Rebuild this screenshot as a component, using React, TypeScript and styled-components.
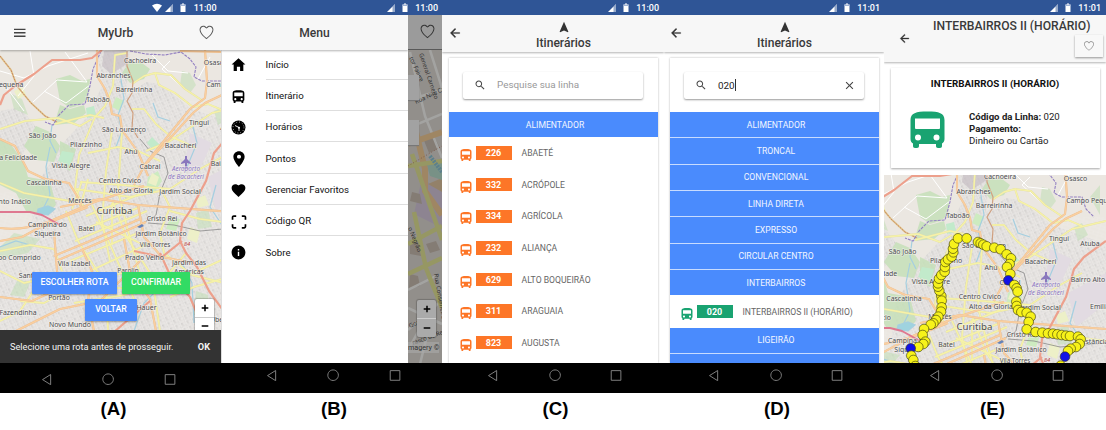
import React from 'react';
import styled, { createGlobalStyle } from 'styled-components';
import {
  IoMdHome, IoMdBus, IoMdPin, IoMdHeart, IoMdQrScanner, IoMdInformationCircle,
  IoMdSearch, IoMdArrowBack, IoMdNavigate, IoMdClose, IoIosHeartEmpty,
} from 'react-icons/io';

const Global = createGlobalStyle`
  body { margin: 0; background: #fff; font-family: Roboto, "Liberation Sans", sans-serif; color: #333; }
  * { box-sizing: border-box; }
  svg { display: block; flex: none; }
`;

const Figure = styled.main`display: flex; width: 1106px; height: 430px; overflow: hidden;`;
const Phone = styled.section<{ $w: number }>`width: ${p => p.$w}px; flex: none; display: flex; flex-direction: column;`;
const Status = styled.div<{ $right: number }>`
  height: 15px; background: #2f5596; color: #fff; display: flex; align-items: center;
  justify-content: flex-end; gap: 6px; padding: 1px ${p => p.$right}px 0 0;
  font-size: 9px; font-weight: 500; line-height: 14px;
  svg { margin-right: 0.5px; }
`;
const Screen = styled.div`height: 348px; position: relative; overflow: hidden; display: flex; flex-direction: column; background: #fff;`;
const Nav = styled.div<{ $left: number; $top: number }>`
  height: 30px; background: #000; display: flex; align-items: flex-start; gap: 49.5px;
  padding: ${p => p.$top}px 0 0 ${p => p.$left}px;
`;
const Caption = styled.div<{ $shift?: number; $w?: number }>`
  font: bold 18.6px/31px "Liberation Sans", sans-serif; color: #000; text-align: center;
  padding-left: ${p => p.$shift || 0}px; width: ${p => p.$w || 226}px;
`;
const Header = styled.header`
  height: 34.5px; flex: none; background: #f7f7f7; display: grid; align-items: center; padding-top: 1px;
  grid-template-columns: 40px 1fr 30px; box-shadow: 0 1px 2px rgba(0,0,0,.3); position: relative; z-index: 1;
`;
const Title = styled.h1`margin: 0; font-size: 12.1px; line-height: 14px; font-weight: 500; color: #3a3a3a; text-align: center;`;
const Backdrop = styled.div`position: absolute; inset: 0;`;
const MenuSlot = styled.div`padding-left: 14px;`;
const HeartSlot = styled.div`padding-left: 7px; color: #555;`;

const MapBody = styled.div`flex: 1; position: relative; display: flex; flex-direction: column; overflow: hidden;`;
const Buttons = styled.div`position: relative; display: flex; flex-wrap: wrap; justify-content: center; gap: 5px; padding: 222px 31px 0 32px;`;
const Button = styled.button<{ $w: number; $color: string }>`
  width: ${p => p.$w}px; height: 22px; border: 0; border-radius: 1px; padding: 0 0 1px; background: ${p => p.$color}; color: #fff;
  font: 500 8.8px/20px Roboto, sans-serif; white-space: nowrap; box-shadow: 0 1px 2px rgba(0,0,0,.35);
`;
const Zoom = styled.div<{ $top: number; $right: number }>`
  position: absolute; top: ${p => p.$top}px; right: ${p => p.$right}px; width: 19px; background: #fff;
  border-radius: 2px; box-shadow: 0 0 1px 1px rgba(0,0,0,.2);
`;
const ZoomKey = styled.div`height: 18.3px; display: grid; place-items: center; & + & { border-top: 1px solid #ccc; }`;
const Toast = styled.div`
  position: relative; margin-top: auto; height: 33.5px; background: #333; color: #f5f5f5; display: flex; align-items: center;
  justify-content: space-between; padding: 1px 11px 0 10px; font-size: 9.2px; white-space: nowrap;
  strong { font-size: 9.2px; font-weight: 700; }
`;

const DrawerRow = styled.div`display: flex; flex: 1;`;
const Drawer = styled.aside`width: 187px; display: flex; flex-direction: column; background: #fff; position: relative; box-shadow: inset 1px 0 #ddd;`;
const DrawerHead = styled.div`height: 34.5px; background: #f7f7f7; display: grid; place-items: center; padding-top: 1px; box-shadow: 0 1px 2px rgba(0,0,0,.3); margin-bottom: -1px;`;
const MenuItem = styled.div`
  height: 31.3px; display: grid; grid-template-columns: 34px 1fr; align-items: center; padding-left: 9px; font-size: 9.7px; color: #111;
  & > span { height: 100%; margin-left: 1.5px; padding-top: 1.5px; border-bottom: 1px solid #dedede; display: flex; align-items: center; }
  &:last-child > span { border-color: transparent; }
`;
const Dimmed = styled.div`width: 34px; position: relative; overflow: hidden; background: #9b9b9b;`;
const DimHead = styled.div`height: 34.5px; display: grid; place-items: center; color: #333; border-bottom: 1px solid #888; padding-left: 4px;`;
const Shade = styled.div`position: absolute; inset: 34px 0 0; background: rgba(0,0,0,.34);`;
const ShadeZoom = styled(Zoom)`background: #aaa; left: 9px; right: auto;`;
const Imagery = styled.div`position: absolute; top: 327px; left: 0; width: 31px; height: 11px; background: rgba(170,170,170,.6); color: #333; font-size: 7.2px; line-height: 11px; white-space: nowrap;`;
const DimCard = styled.div<{ $top: number }>`position: absolute; top: ${p => p.$top}px; left: 0; width: 11px; height: 25px; background: #a2a2a2; box-shadow: 0 1px 1px #777;`;

const ListHeader = styled(Header)`
  height: 37px; grid-template-columns: 26px 1fr 26px; align-items: start; padding-top: 0;
`;
const BackSlot = styled.div<{ $l: number; $t: number }>`
  padding: ${p => p.$t}px 0 0 ${p => p.$l}px; color: #333;
  svg { stroke: #333; stroke-width: 12; }
`;
const Stacked = styled.div`display: flex; flex-direction: column; align-items: center; padding: 4.5px 0 0 21px; color: #333; gap: 2px;`;
const Card = styled.div<{ $l: number }>`
  width: 209px; margin: 5.5px 0 0 ${p => p.$l}px; flex: 1; background: #fff; box-shadow: 0 0 2px rgba(0,0,0,.3);
  display: flex; flex-direction: column; overflow: hidden;
`;
const Search = styled.div`
  margin: 14px 14.5px 13.5px; height: 27px; flex: none; border-radius: 2px; box-shadow: 0 1px 2px rgba(0,0,0,.4);
  display: flex; align-items: center; padding: 0 8.5px 0 10.5px; color: #444; font-size: 9.9px;
`;
const Field = styled.span<{ $on?: boolean }>`
  margin-left: 11.5px; flex: 1; color: ${p => (p.$on ? '#222' : '#999')}; line-height: 12px;
`;
const Caret = styled.i`display: inline-block; width: 1px; height: 12px; background: #333; vertical-align: -2px;`;
const Category = styled.div`
  height: 25.35px; flex: none; background: #4a8bfd; color: #f2f6ff; font-size: 8.65px; display: grid; place-items: center; padding-left: 4px;
  & + & { margin-top: 1px; }
`;
const Blue = styled.div`background: #c8dcff; display: flex; flex-direction: column; flex: none;`;
const Line = styled.div<{ $color: string; $h?: number }>`
  height: ${p => p.$h || 31.6}px; flex: none; display: flex; align-items: center; padding-left: 9.5px; font-size: 8.65px; color: #666;
  svg { color: ${p => p.$color}; margin: 4px 1.5px 0 0; }
  b { width: 36px; height: 13.5px; background: ${p => p.$color}; color: #fff; display: grid; place-items: center; margin-right: 10px; font-size: 9px; }
`;

const DetailHeader = styled(Header)`height: 47px; grid-template-columns: 46px 1fr; align-items: start; padding-top: 0;`;
const DetailTitle = styled(Title)`text-align: left; white-space: nowrap; padding: 3.5px 0 2px 3px; line-height: 14px; font-size: 12.150px;`;
const Favorite = styled.div`width: 28px; height: 22.5px; margin: 0 3px 0 auto; background: #f8f8f8; box-shadow: 0 1px 2px rgba(0,0,0,.4); display: grid; place-items: center; color: #888;`;
const InfoCard = styled.div`
  width: 209px; height: 100px; margin: 6px 0 7px 6.5px; flex: none; background: #fff; box-shadow: 0 1px 2px rgba(0,0,0,.35); color: #222;
`;
const InfoTitle = styled.h2`margin: 0; padding-top: 9px; text-align: center; font-size: 9.8px; line-height: 14px; font-weight: 700; color: #111;`;
const InfoRow = styled.div`display: flex; align-items: center; gap: 24px; padding: 19.5px 0 0 19.5px; font-size: 9.6px; line-height: 12.3px;`;

const Bars = () => <svg width="12" height="10" viewBox="0 0 12 10"><path d="M0 1.400h11.500M0 4.800h11.500M0 8.200h11.500" stroke="#444" strokeWidth="1.400" /></svg>;
const Clock = () => (
  <svg width="15" height="15" viewBox="0 0 30 30">
    <circle cx="15" cy="15" r="14" fill="#000" />
    <circle cx="15" cy="15" r="11" fill="none" stroke="#fff" strokeWidth="1.600" strokeDasharray="1.600 4.160" />
    <path d="M8 11l8 4v7" stroke="#fff" strokeWidth="1.800" fill="none" /><circle cx="16" cy="15.500" r="2" fill="#fff" />
  </svg>
);
const BigBus = () => (
  <svg width="35" height="37" viewBox="0 0 35 37">
    <path fill="#19a371" fillRule="evenodd" d="M.5 9C.5 2 6 .5 17.500.5S34.500 2 34.500 9v19c0 2-1 3.500-2.500 4.500V35c0 1-.7 2-2 2h-2c-1.300 0-2-1-2-2v-2H9v2c0 1-.7 2-2 2H5c-1.300 0-2-1-2-2v-2.500C1.500 31.500.5 30 .5 28zM5 7.500V17q0 1 1 1h23q1 0 1-1V7.500zM8 23.500a3 3 0 1 0 0 6 3 3 0 0 0 0-6zm18.500 0a3 3 0 1 0 0 6 3 3 0 0 0 0-6z" />
  </svg>
);
const Sign = ({ minus }: { minus?: boolean }) => (
  <svg width="8" height="8" viewBox="0 0 8 8"><path d={minus ? 'M.7 4h6.600' : 'M.7 4h6.600M4 .7v6.600'} stroke="#000" strokeWidth="1.500" /></svg>
);
const StatusBar = ({ time, wifi, right }: { time: string; wifi?: boolean; right: number }) => (
  <Status $right={right}>
    <svg width={wifi ? 35 : 22} height="10" viewBox={wifi ? '0 0 35 10' : '13 0 22 10'} fill="#fff">
      {wifi && <path d="M0 2.500Q5-1 10 2.500L5 9z" />}
      <path d="M13 9l8-8v8z" /><path d="M18.500 3.500l2.500-2.500v8h-2.500z" opacity=".5" fill="#2f5596" />
      <path d="M28.500 1.500h1.500v-1h2v1h1.500V9h-5z" /><path d="M28.500 1.500h5v1.500h-5z" fill="#9eb2d5" />
    </svg>
    <span>{time}</span>
  </Status>
);
const NavBar = ({ left, top = 6 }: { left: number; top?: number }) => (
  <Nav $left={left} $top={top}>
    {['M9.500 1.500v10L1.500 6.500z', 'M6 .9a5.200 5.200 0 1 0 .01 0z', 'M1.200 1.600h9.500v9.500H1.200z'].map(d => (
      <svg key={d} width="12.200" height="12.200" viewBox="0 0 12 12"><path d={d} fill="none" stroke="#8a8a8a" strokeWidth=".9" /></svg>
    ))}
  </Nav>
);
const ZoomKeys = () => <><ZoomKey><Sign /></ZoomKey><ZoomKey><Sign minus /></ZoomKey></>;

const places: [string, number, number, number?][] = [
  ['Cachoeira', 140, 62], ['Abranches', 113.500, 77], ['Barreirinha', 134, 91], ['Taboão', 98, 100.500],
  ['Osasco', 215.500, 64], ['Campo Pequeno', 233, 86], ['Tingui', 199, 124], ['Atuba', 230, 128.500],
  ['São Lourenço', 124, 131], ['São João', 42.500, 137], ['Pilarzinho', 86, 146], ['Ahú', 131, 153],
  ['Bacacheri', 180.500, 147], ['Santa Felicidade', 11, 158.500], ['Vista Alegre', 71, 166.500], ['Cabral', 150, 168],
  ['Bairro Alto', 228, 164.500], ['Cascatinha', 44, 183.500], ['Centro Cívico', 120, 181.500], ['Alto da Gloria', 131, 192],
  ['Jardim Social', 180, 192.500], ['Santo Inácio', 11, 203], ['Mercês', 80, 202], ['Curitiba', 114.500, 213, 9.700],
  ['Cristo Rei', 162, 220], ['Campina do', 47.500, 225.500], ['Siqueira', 47.500, 234.500], ['Batel', 86.500, 229.500],
  ['Jardim Botânico', 161, 234.500], ['Vila Torres', 155, 246, 6.300], ['Campo Comprido', 12, 259], ['Prado Velho', 144.500, 258.500],
  ['Vila Izabel', 74, 264.500], ['Jardim das', 189, 264], ['Américas', 189, 272.500], ['Parolin', 128, 271.500, 6.500],
  ['Santa', 28, 277], ['Portão', 59, 299], ['Fazendinha', 18, 314], ['Hauer', 146.500, 308.500], ['Novo Mundo', 70, 325.500],
  ['Pequena', 9, 86], ['Emiliano', 244, 192], ['Estância', 235, 226.500], ['Uberaba', 224, 321],
];
const orange = ['M97 49v26l8 13 5 13 2 12 8 2 2 14 16 22 10 24', 'M205 49l2 31-2 17-15 11-18 22-26 32-12 22', 'M222 94l-17 8-12 10-20 22-30 32', 'M0 138l15 7 13 25 17 8 24 4 8 13 5 13',
  'M60 206l40-8 38 6 108 8', 'M0 227q22 3 48-6l44-19 32-11 20-6', 'M0 240l22-4 26-14 40-16', 'M54 255l36-15 50-22', 'M56 260l40-17 50-22', 'M54 230l3 40 5 16-30 14-32-4', 'M82 248l10 22-4 30 6 30',
  'M140 260l-40 40-40 8-44 22', 'M138 204l6 32 18 20 26 5', 'M124 238l6 32 20 28 6 32'];
const yellow = ['M127 52l-12 2-2 31-8 20-10 11-16 38-4 34 10 20', 'M55 123l35-9 14 3', 'M0 128l25-8 33-3 22 8 12-7', 'M132 83l12-8 11-3 4 12 16 8 18 14 15-3 14 6', 'M155 72l16 2 14 14 18 12', 'M0 182l24 10 34 6 24 4', 'M80 181l30 2 60 5', 'M76 188l54 8 40-8 30-20 22-12', 'M112 130l-6 40-4 50 8 40', 'M122 130l-4 60 10 40 14 50',
  'M88 152l30-6 20 4 22 10', 'M132 108h12l12 15 14 12 26 12', 'M0 250l30-6 24 4 8 22', 'M66 210l12 30 28 44 2 46', 'M92 204l20 44 22 50', 'M112 199l14 36 26 40 8 55', 'M160 186l10 20-10 26 4 20 28 22 32 8', 'M170 210l30 8 46 6', 'M0 270l24 12 36-8 38 12 40 2 42-10 44-20', 'M20 300l24 2 38-20 40-10', 'M0 320l20-10 16-24', 'M170 296l24-10 28-8', 'M96 221l48 23', 'M86 215l54-22', 'M80 230l60-24', 'M75 240l72-30', 'M70 260l68-28', 'M90 270l60-28', 'M112 202v42', 'M186 252l-22 26-40 16-50 8', 'M146 150l24-10 42-28 34-8', 'M82 180l-10 28', 'M88 178l-8 28'];
const CityMap = ({ view, w, h }: { view: string; w: number; h: number }) => (
  <svg width={w} height={h} viewBox={view}>
    <defs>
      <pattern id="blocks" width="6" height="6" patternUnits="userSpaceOnUse" patternTransform="rotate(-24)">
        <path fill="#dddad8" d="M0 0h6v6H0z" /><path d="M0 1h6M1 0v6M3.500 1v5M0 4h3" stroke="#f0eeeb" strokeWidth=".6" /><path d="M4 2h1.500v1.500H4z" fill="#d2d0cf" />
      </pattern>
      <pattern id="lanes" width="9" height="7" patternUnits="userSpaceOnUse" patternTransform="rotate(18)">
        <path d="M0 1h9M1 0v7M5.500 1v3M0 4h9" stroke="#efedea" strokeWidth=".7" fill="none" />
      </pattern>
    </defs>
    <path fill="#ebe7e1" d="M0 40h250v295H0z" />
    <path fill="url(#blocks)" d="M97 49l33 2-4 44 20-14 14 2 30 24 56 20v208H0V260l30-25 6-50 24-40 28-30 14-30zM0 110l20-4 16 20-16 34-20-10z" />
    <path fill="url(#lanes)" opacity=".6" d="M150 100h96v235H150zM0 190l70 10 10 135H0z" />
    <path fill="#c7bfc5" d="M104 50l22-1 1 14-16 10-9-8z" opacity=".7" />
    <path fill="#e2dbe2" d="M190 132l22 10-16 34-14-10 6-18zM208 176l38-20v30l-30 24z" />
    <g fill="#c5dfb9">
      <path d="M56 78l14-4 12 6 8-2-2 20-8 6-10 3-10-7zM60 104l10 4 14-4 2 8-12 10-20 2zM130 60l12 2 8 6-6 10-14 4-8-10zM0 138l10 4 14 20 4 14 22 4 6 24-10 10-20-4-10-18-16-8zM36 125l14 6 10 14-6 16-18-2-12-14zM60 140l16 8-6 22-10-6z" opacity=".85" />
      <path d="M182 70l8 2 6 12-6 8-10-8zM214 110l8-4 6 12-10 6zM230 80l10-12v30zM10 92l12 6 6 16-14-6zM0 246l14-14 26 6-12 14-28 6zM196 212l12-4 4 18-14 2zM196 290l12 4 2 16-16 4zM18 278l12 4-6 14-14-2z" opacity=".6" />
      <path d="M148 176l10-6 4 10-8 12-8-2zM116 96l8 4-4 10-8-4zM170 216l10 2-4 12-10-2z" fill="#cdebc0" />
    </g>
    <g fill="#c2eacb"><path d="M62 150l12 2-4 12-12-4zM86 107l8-2 2 10-9 2zM152 136l8 8-7 5-6-7z" /></g>
    <g fill="#edf0c8"><path d="M152 172l7 4-3 9-8-3zM196 198l9-4 4 10-11 3zM14 90l9-4 3 8-8 4zM190 226l10 4-3 12-10-4z" /></g>
    <g fill="none" stroke="#a5cfe0" strokeWidth="1.200">
      <path d="M120 72l4 26-6 16 4 16-6 16M153 102l5 14 12 4M50 146l-4 20 4 28-8 16M52 124l-2 16 6 12M193 126l4 16-10 24M0 246l16-6 14 4M216 184l-6 22 12 18M164 282l-20 20-10 28M182 262l10 20 2 40" />
      <path d="M38 208l10-3 7 3-7 6-11-1z" fill="#9fd3df" />
    </g>
    <g fill="none" stroke="#fff" strokeWidth="1"><path d="M0 70l24 7 24-12 40-13M30 50l4 25-16 20M65 51l22 30-30-2-24 22M150 52l18 18 20 2M210 56l-12 22M44 90l22 12 24-18M24 110l-18-24M170 60l-8 8 20 18" /></g>
    <path d="M140 138l10 12 14 6 4 16-8 20-4 22-16 10M148 222l26 2 26 6 46-4" fill="none" stroke="#888" strokeWidth=".8" />
    <path d="M0 55l11 14 6 16 14 17 14 13 12 6" fill="none" stroke="#e4c88c" strokeWidth="1.800" /><path d="M0 55l11 14 6 16 14 17 14 13 12 6" fill="none" stroke="#b56a58" strokeWidth=".7" strokeDasharray="2 1" />
    <path d="M101 50l-8 18-3 17-5 18-16 1-10 10-6 10-8-3M130 50l16 3 19 1 16-3 9 7 6 8-2 10 8 4 20 0 4 12 8 8" fill="none" stroke="#9380c2" strokeWidth="1.100" strokeDasharray="3 1" />
    <g fill="none" strokeLinejoin="round">
      {yellow.map(d => <path key={d} d={d} stroke="#e2dda6" strokeWidth="1.900" />)}
      {yellow.map(d => <path key={d} d={d} stroke="#f6f2a8" strokeWidth="1.400" />)}
      {orange.map(d => <path key={d} d={d} stroke="#ecbb8c" strokeWidth="2.100" />)}
      {orange.map(d => <path key={d} d={d} stroke="#f9cfa0" strokeWidth="1.500" />)}
      <path d="M127 50v15l6 15-1 12-5 8 6 12-1 15 6 10" stroke="#d0a080" strokeWidth="1.200" />
      <path d="M0 211h30l12 3 18 10" stroke="#df7890" strokeWidth="2" />
      <path d="M0 104l4-10 11-9 19-12 18-14h28l12-2 10-8M246 124l-22 16-10 12-8 28-16 30-8 12-2 18 6 12 11 14 12 24 16 22M134 250l28 6 20-16M160 252l10 22 20 22 14 34M150 300l-36 31" stroke="#eda08c" strokeWidth="2.200" />
      <path d="M180 50l42 1" stroke="#f2c18e" strokeWidth="2" />
    </g>
    <path d="M137 226l5-3 2 2-4 2z" fill="#6482b8" />
    <path d="M185 155h2v3l4 4v1l-4-1v4l2 1v1h-6v-1l2-1v-4l-4 1v-1l4-4z" fill="#8977bd" />
    <g fontFamily='"Noto Sans", sans-serif' textAnchor="middle" fill="#4d4d50" stroke="#f4f2ee" strokeWidth="1.400" strokeOpacity=".65" paintOrder="stroke">
      {places.map(([name, x, y, size]) => <text key={name} x={x} y={y} fontSize={size || 6.900}>{name}</text>)}
      <g fontStyle="italic" fontSize="6.300" fill="#8b76c2"><text x="186" y="170">Aeroporto</text><text x="186" y="177.500">de Bacacheri</text></g>
      <text x="187" y="245" fontStyle="italic" fontSize="6" fill="#b94242">84</text>
    </g>
  </svg>
);

const StreetMap = () => (
  <svg width="34" height="314" viewBox="0 0 34 314">
    <path fill="#ded9d4" d="M0 0h34v314H0z" />
    <path fill="#d6c9dd" d="M14 128l20 14v36l-28-14z" /><path fill="#dfc4a0" d="M20 134l14-6v14z" /><path fill="#b6dccb" d="M18 112h16v18l-12-4z" />
    <g fill="#c9bcb0"><path d="M15 88l10-4 7 14-11 5zM2 190l9 2 2 14-11-2zM2 224l8 2 2 10-11 2zM18 194l10-3 4 9-10 3zM4 142l8 2 2 10-12-3z" /></g>
    <g fill="none" stroke="#f8f8f5" strokeWidth="2.500"><path d="M2 2l15 64 17 42M0 50l34-10M0 78l34-14M22 0l12 38M0 258l34 16M0 240l28-14M0 280l34-30M0 300l22-40M12 314l8-32" /></g>
    <g fill="none" stroke="#f2cb97" strokeWidth="6"><path d="M0 94l34-12M8 82l9 37v22l17 24" /></g>
    <g fill="none" stroke="#e4e696" strokeWidth="4.500"><path d="M0 116l34-5M4 104l30 86M0 194l34-18M0 224l34-16M6 162l12 56 16 40" /></g>
    <path d="M22 106l12 16" stroke="#8cc2d4" strokeWidth="4" strokeDasharray="2 1" />
    <path d="M0 116l34-20" stroke="#bd7c64" strokeWidth=".8" strokeDasharray="1 2" fill="none" />
    <g fontFamily='"Noto Sans", sans-serif' fontSize="6" fill="#4a4a4a">
      <text transform="translate(11 4) rotate(71)">General Carneiro</text><text transform="translate(1 8) rotate(65)">tor Faivre</text>
      <text transform="translate(8 54) rotate(-25)">Rua Nilo Cairo</text><text transform="translate(0 178) rotate(68)">o Negrão</text>
      <text transform="translate(26 224) rotate(80)">Rua Conselheiro</text><text transform="translate(2 278) rotate(-25)">Gon</text><text transform="translate(5 295) rotate(-20)">rasco de Re</text>
    </g>
  </svg>
);

const routeStops = '172,378 166,362 162,350 162,340 165,326 172,315 182,305 183,291 184,276 192,268 203,260 208,247 207,236 210,222 222,205 248,205 282,216 290,220 298,224 308,229 331,233 350,238 368,253 381,265 377,282 369,291 379,312 373,331 391,345 398,355 401,365 397,395 398,408 402,420 412,426 428,428 440,440 434,456 428,478 455,486 475,488 492,490 507,491 520,493 533,495 546,497 558,498 582,500 590,508 587,522 576,531 560,536 552,543 543,560 530,587 518,601 173,392 173,412 171,425 163,440 156,450 148,460 140,464 120,477 116,495 124,515 118,522 103,531 80,535 82,557 88,570 94,588 94,608'.split(' ');
const terminals = ['373,331', '80,535', '543,560'];
const Route = () => (
  <svg width="222" height="188" viewBox="0 15 666 564">
    {routeStops.map(s => {
      const [x, y] = s.split(',').map(Number);
      return <circle key={s} cx={x} cy={y} r="14.500" fill={terminals.includes(s) ? '#1111e6' : '#f7f21a'} stroke="#33330a" strokeWidth="1.800" />;
    })}
  </svg>
);

const menu: [string, React.ReactNode][] = [
  ['Início', <IoMdHome size={17} />], ['Itinerário', <IoMdBus size={17} />], ['Horários', <Clock />], ['Pontos', <IoMdPin size={18} />],
  ['Gerenciar Favoritos', <IoMdHeart size={17} />], ['Código QR', <IoMdQrScanner size={18} />], ['Sobre', <IoMdInformationCircle size={17} />],
];
const IconBox = styled.div`display: grid; place-items: center; width: 17px; height: 19px; color: #000; padding-top: 1.5px;`;
const lines = [['226', 'ABAETÉ'], ['332', 'ACRÓPOLE'], ['334', 'AGRÍCOLA'], ['232', 'ALIANÇA'], ['629', 'ALTO BOQUEIRÃO'], ['311', 'ARAGUAIA'], ['823', 'AUGUSTA']];
const ItineraryHeader = ({ left }: { left: number }) => (
  <ListHeader>
    <BackSlot $l={left} $t={10.5}><IoMdArrowBack size={14} /></BackSlot>
    <Stacked><IoMdNavigate size={14} /><Title>Itinerários</Title></Stacked>
  </ListHeader>
);
const LineItem = ({ code, name, color, h }: { code: string; name: string; color: string; h?: number }) => (
  <Line $color={color} $h={h}><IoMdBus size={16} /><b>{code}</b>{name}</Line>
);

export default function App() {
  return (
    <Figure>
      <Global />
      <Phone $w={221}>
        <StatusBar time="11:00" wifi right={4.5} />
        <Screen>
          <Header><MenuSlot><Bars /></MenuSlot><Title>MyUrb</Title><HeartSlot><IoIosHeartEmpty size={17} /></HeartSlot></Header>
          <MapBody>
            <Backdrop><CityMap view="0 49 221 314" w={221} h={314} /></Backdrop>
            <Buttons>
              <Button $w={85} $color="#4a8bfd">ESCOLHER ROTA</Button><Button $w={68} $color="#32db64">CONFIRMAR</Button>
              <Button $w={52} $color="#4a8bfd">VOLTAR</Button>
            </Buttons>
            <Zoom $top={249} $right={7}><ZoomKeys /></Zoom>
            <Toast><span>Selecione uma rota antes de prosseguir.</span><strong>OK</strong></Toast>
          </MapBody>
        </Screen>
        <NavBar left={40.5} top={10} />
        <Caption $shift={1}>(A)</Caption>
      </Phone>
      <Phone $w={221}>
        <StatusBar time="11:00" right={4} />
        <Screen>
          <DrawerRow>
            <Drawer>
              <DrawerHead><Title>Menu</Title></DrawerHead>
              {menu.map(([name, icon]) => <MenuItem key={name}><IconBox>{icon}</IconBox><span>{name}</span></MenuItem>)}
            </Drawer>
            <Dimmed>
              <DimHead><IoIosHeartEmpty size={17} /></DimHead>
              <StreetMap />
              <Shade />
              <DimCard $top={60} /><DimCard $top={105} />
              <ShadeZoom $top={285} $right={0}><ZoomKeys /></ShadeZoom>
              <Imagery>magery ©</Imagery>
            </Dimmed>
          </DrawerRow>
        </Screen>
        <NavBar left={44.5} />
        <Caption>(B)</Caption>
      </Phone>
      <Phone $w={222}>
        <StatusBar time="11:00" right={5} />
        <Screen>
          <ItineraryHeader left={6} />
          <Card $l={6.5}>
            <Search><IoMdSearch size={12} /><Field>Pesquise sua linha</Field></Search>
            <Category>ALIMENTADOR</Category>
            {lines.map(([code, name]) => <LineItem key={code} code={code} name={name} color="#fd7627" />)}
          </Card>
        </Screen>
        <NavBar left={45} />
        <Caption $shift={1}>(C)</Caption>
      </Phone>
      <Phone $w={220}>
        <StatusBar time="11:01" right={4} />
        <Screen>
          <ItineraryHeader left={5} />
          <Card $l={5.5}>
            <Search><IoMdSearch size={12} /><Field $on>020<Caret /></Field><IoMdClose size={13} /></Search>
            <Blue>{['ALIMENTADOR', 'TRONCAL', 'CONVENCIONAL', 'LINHA DIRETA', 'EXPRESSO', 'CIRCULAR CENTRO', 'INTERBAIRROS'].map(c => <Category key={c}>{c}</Category>)}</Blue>
            <LineItem code="020" name="INTERBAIRROS II (HORÁRIO)" color="#19a371" h={32.3} />
            <Blue><Category>LIGEIRÃO</Category><Category /></Blue>
          </Card>
        </Screen>
        <NavBar left={44} />
        <Caption>(D)</Caption>
      </Phone>
      <Phone $w={222}>
        <StatusBar time="11:01" right={5} />
        <Screen>
          <DetailHeader>
            <BackSlot $l={13.5} $t={17}><IoMdArrowBack size={13} /></BackSlot>
            <div><DetailTitle>INTERBAIRROS II (HORÁRIO)</DetailTitle><Favorite><IoIosHeartEmpty size={12} /></Favorite></div>
          </DetailHeader>
          <InfoCard>
            <InfoTitle>INTERBAIRROS II (HORÁRIO)</InfoTitle>
            <InfoRow><BigBus /><div><b>Código da Linha:</b> 020<br /><b>Pagamento:</b><br />Dinheiro ou Cartão</div></InfoRow>
          </InfoCard>
          <MapBody>
            <Backdrop><CityMap view="24 58 222 188" w={222} h={188} /></Backdrop>
            <Backdrop><Route /></Backdrop>
          </MapBody>
        </Screen>
        <NavBar left={45} />
        <Caption $w={217}>(E)</Caption>
      </Phone>
    </Figure>
  );
}
